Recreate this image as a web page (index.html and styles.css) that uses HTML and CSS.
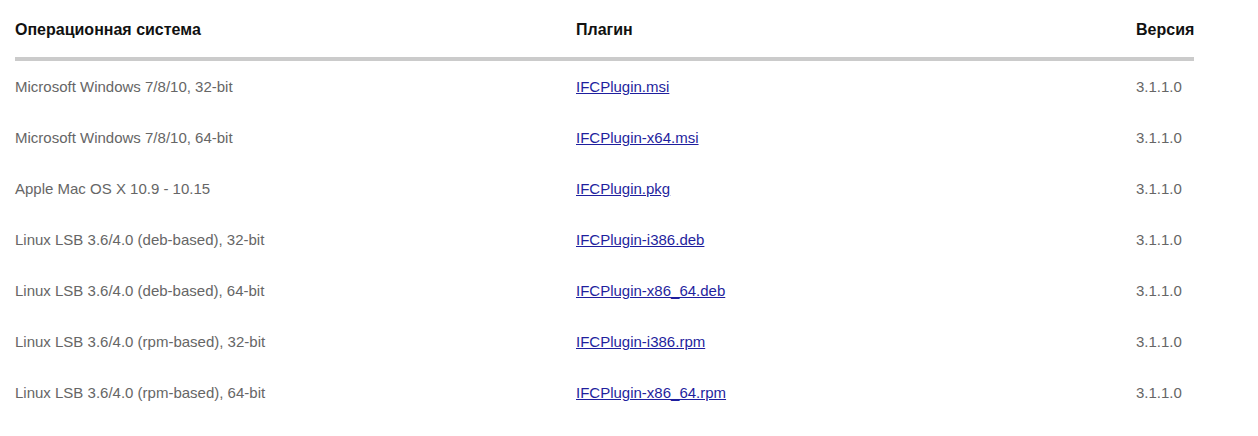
FILE: index.html
```html
<!DOCTYPE html>
<html lang="ru">
<head>
<meta charset="utf-8">
<link rel="stylesheet" href="styles.css">
</head>
<body>
<table class="downloads">
  <thead>
    <tr><th class="c-os">Операционная система</th><th class="c-plugin">Плагин</th><th class="c-ver">Версия</th></tr>
  </thead>
  <tbody>
    <tr><td>Microsoft Windows 7/8/10, 32-bit</td><td><a href="#">IFCPlugin.msi</a></td><td>3.1.1.0</td></tr>
    <tr><td>Microsoft Windows 7/8/10, 64-bit</td><td><a href="#">IFCPlugin-x64.msi</a></td><td>3.1.1.0</td></tr>
    <tr><td>Apple Mac OS X 10.9 - 10.15</td><td><a href="#">IFCPlugin.pkg</a></td><td>3.1.1.0</td></tr>
    <tr><td>Linux LSB 3.6/4.0 (deb-based), 32-bit</td><td><a href="#">IFCPlugin-i386.deb</a></td><td>3.1.1.0</td></tr>
    <tr><td>Linux LSB 3.6/4.0 (deb-based), 64-bit</td><td><a href="#">IFCPlugin-x86_64.deb</a></td><td>3.1.1.0</td></tr>
    <tr><td>Linux LSB 3.6/4.0 (rpm-based), 32-bit</td><td><a href="#">IFCPlugin-i386.rpm</a></td><td>3.1.1.0</td></tr>
    <tr><td>Linux LSB 3.6/4.0 (rpm-based), 64-bit</td><td><a href="#">IFCPlugin-x86_64.rpm</a></td><td>3.1.1.0</td></tr>
  </tbody>
</table>
</body>
</html>
```
FILE: styles.css
```css
html, body { margin: 0; padding: 0; background: #fff; }
body { font-family: "Liberation Sans", Arial, sans-serif; font-size: 15px; }
.downloads {
  border-collapse: collapse;
  margin-left: 15px;
  width: 1179px;
  table-layout: fixed;
}
.c-os { width: 561px; }
.c-plugin { width: 560px; }
.c-ver { width: 58px; }
.downloads th {
  text-align: left;
  font-weight: bold;
  font-size: 16px;
  color: #111;
  line-height: 20px;
  padding: 20px 0 17px 0;
  border-bottom: 4px solid #cbcbcb;
  white-space: nowrap;
}
.downloads td {
  color: #666;
  line-height: 20px;
  padding: 16px 0 15px 0;
  white-space: nowrap;
}
.downloads a { color: #1f1f9e; text-decoration: underline; }
```
